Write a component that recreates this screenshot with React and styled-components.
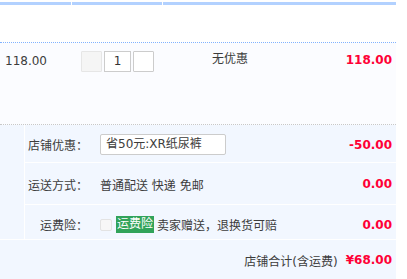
import React from "react";
import styled, { createGlobalStyle } from "styled-components";

const Global = createGlobalStyle`
  html, body { margin: 0; padding: 0; background: #fff; }
  body {
    font-family: "DejaVu Sans", "Noto Sans CJK SC", sans-serif;
    font-size: 12px;
    color: #3c3c3c;
  }
`;

const Page = styled.div`
  width: 396px;
`;

const HeadBar = styled.div`
  display: flex;
  gap: 1px;
  margin-top: 2px;
  height: 3px;
`;

const HeadCell = styled.div`
  width: ${(p) => p.w}px;
  flex: ${(p) => (p.grow ? 1 : "none")};
  background: #b2d1ff;
`;

const Spacer = styled.div`
  height: 37px;
  border-bottom: 1px dotted #80b2ff;
`;

const ItemRow = styled.div`
  background: #fbfcff;
  border-bottom: 1px dotted #c8c8c8;
  display: flex;
  align-items: flex-start;
  padding-top: 8px;
  box-sizing: border-box;
  height: 82px;
`;

const Price = styled.div`
  width: 81px;
  padding-left: 5px;
  box-sizing: border-box;
  line-height: 21px;
`;

const Qty = styled.div`
  display: flex;
  gap: 1px;
  width: 100px;
`;

const QtyBtn = styled.div`
  width: 19px;
  height: 19px;
  border: 1px solid ${(p) => (p.disabled ? "#e6e6e6" : "#ccc")};
  background: ${(p) => (p.disabled ? "#f5f5f5" : "#fff")};
  border-radius: 1px;
  margin-right: ${(p) => (p.gapRight ? 1 : 0)}px;
`;

const QtyInput = styled.div`
  width: 25px;
  height: 19px;
  border: 1px solid #ccc;
  background: #fff;
  text-align: center;
  line-height: 19px;
  color: #333;
  margin-right: 1px;
`;

const Promo = styled.div`
  width: 98px;
  text-align: center;
  line-height: 17px;
`;

const Total = styled.div`
  margin-left: auto;
  color: #ff0036;
  font-weight: bold;
  padding-right: 4px;
  line-height: 19px;
`;

const Block = styled.div`
  background: #f2f7ff;
  display: flex;
  border-bottom: 1px solid #fff;
`;

const Gutter = styled.div`
  width: 24px;
  border-right: 1px solid #fff;
`;

const Rows = styled.div`
  flex: 1;
  display: flex;
  flex-direction: column;
`;

const Row = styled.div`
  height: ${(p) => p.h}px;
  box-sizing: border-box;
  padding-top: ${(p) => p.pt}px;
  display: flex;
  align-items: center;
  border-bottom: ${(p) => (p.last ? "none" : "1px solid #fff")};
`;

const RowInner = styled.div`
  display: flex;
  align-items: center;
  flex: 1;
  height: 22px;
`;

const Label = styled.div`
  width: 63px;
  text-align: right;
  margin-right: 12px;
  white-space: nowrap;
`;

const Field = styled.div`
  flex: 1;
  display: flex;
  align-items: center;
  white-space: nowrap;
`;

const Select = styled.div`
  width: 119px;
  height: 19px;
  box-sizing: content-box;
  border: 1px solid #ccc;
  border-radius: 2px;
  background: #fff;
  padding-left: 5px;
  line-height: 19px;
`;

const Amount = styled.div`
  color: #ff0036;
  font-weight: bold;
  padding-right: 4px;
`;

const Check = styled.div`
  width: 10px;
  height: 10px;
  border: 1px solid #e3e3e3;
  border-radius: 2px;
  background: #f7f7f7;
  margin-right: 4px;
`;

const Badge = styled.span`
  background: #31a35a;
  color: #fff;
  padding: 0 1px;
  line-height: 17px;
  margin-right: 3px;
`;

const Footer = styled.div`
  background: #f2f7ff;
  height: 40px;
  display: flex;
  justify-content: flex-end;
  align-items: center;
  padding-right: 4px;
`;

const FooterLabel = styled.span`
  margin-right: 8px;
`;

const FooterTotal = styled.span`
  color: #ff0036;
  font-weight: bold;
`;

export default function App() {
  return (
    <Page>
      <Global />
      <HeadBar>
        <HeadCell w={71} />
        <HeadCell w={90} />
        <HeadCell grow />
      </HeadBar>
      <Spacer />
      <ItemRow>
        <Price>118.00</Price>
        <Qty>
          <QtyBtn disabled gapRight />
          <QtyInput>1</QtyInput>
          <QtyBtn />
        </Qty>
        <Promo>无优惠</Promo>
        <Total>118.00</Total>
      </ItemRow>
      <Block>
        <Gutter />
        <Rows>
          <Row h={38} pt={2}>
            <RowInner>
              <Label>店铺优惠：</Label>
              <Field>
                <Select>省50元:XR纸尿裤</Select>
              </Field>
              <Amount>-50.00</Amount>
            </RowInner>
          </Row>
          <Row h={42} pt={1}>
            <RowInner>
              <Label>运送方式：</Label>
              <Field>普通配送 快递 免邮</Field>
              <Amount>0.00</Amount>
            </RowInner>
          </Row>
          <Row h={34} pt={5} last>
            <RowInner>
              <Label>运费险：</Label>
              <Field>
                <Check />
                <Badge>运费险</Badge>
                卖家赠送，退换货可赔
              </Field>
              <Amount>0.00</Amount>
            </RowInner>
          </Row>
        </Rows>
      </Block>
      <Footer>
        <FooterLabel>店铺合计(含运费)</FooterLabel>
        <FooterTotal>¥68.00</FooterTotal>
      </Footer>
    </Page>
  );
}
